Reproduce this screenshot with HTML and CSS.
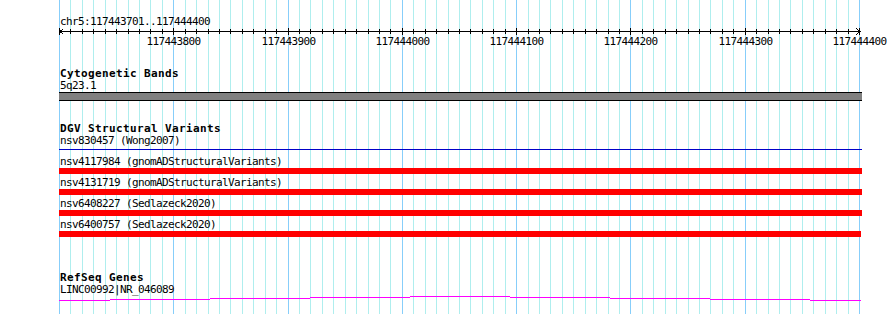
FILE: index.html
```html
<!DOCTYPE html>
<html lang="en">

<head>
    <meta charset="UTF-8">
    <meta name="viewport" content="width=device-width, initial-scale=1.0">
    <title>chr5:117443701..117444400</title>
    <link rel="stylesheet" href="styles.css">
</head>

<body>
    <div id="panel">
        <svg id="grid" width="890" height="314"></svg>
        <div class="label coord">chr5:117443701..117444400</div>
        <svg id="ruler" width="890" height="19"></svg>

        <div class="track" id="cytoband">
            <div class="label title">Cytogenetic Bands</div>
            <div class="label">5q23.1</div>
            <div class="band"></div>
        </div>

        <div class="track" id="dgv">
            <div class="label title">DGV Structural Variants</div>
            <div class="label">nsv830457 (Wong2007)</div>
            <div class="thin"></div>
            <div id="variants"></div>
        </div>

        <div class="track" id="refseq">
            <div class="label title">RefSeq Genes</div>
            <div class="label">LINC00992|NR_046089</div>
            <svg id="gene" width="890" height="6"></svg>
        </div>
    </div>
    <script>
        const left = 59;
        const step = 800 / 70;

        function xAt(i) {
            return Math.round(left + i * step) + 0.5;
        }

        function renderGrid() {
            let mess = "";
            for (let i = 0; i <= 70; i++) {
                let cls = i % 10 === 0 ? "major" : "minor";
                mess += `<line class="${cls}" x1="${xAt(i)}" y1="0" x2="${xAt(i)}" y2="314"/>`;
            }
            document.getElementById("grid").innerHTML = mess;
        }

        function renderRuler() {
            let mess = `<line class="axis" x1="59" y1="2.5" x2="860" y2="2.5"/>`;
            mess += `<polyline class="axis" points="63.5,-0.5 60,2.5 63.5,5.5"/>`;
            mess += `<polyline class="axis" points="856.5,-0.5 860,2.5 856.5,5.5"/>`;
            for (let i = 0; i <= 70; i++) {
                if (i % 10 === 0) {
                    mess += `<line class="axis" x1="${xAt(i)}" y1="-1" x2="${xAt(i)}" y2="6"/>`;
                    if (i > 0) {
                        mess += `<text class="pos" x="${xAt(i)}" y="16">${117443700 + i * 10}</text>`;
                    }
                } else {
                    mess += `<line class="axis" x1="${xAt(i)}" y1="0" x2="${xAt(i)}" y2="5"/>`;
                }
            }
            document.getElementById("ruler").innerHTML = mess;
        }

        function renderVariants() {
            let list = [
                "nsv4117984 (gnomADStructuralVariants)",
                "nsv4131719 (gnomADStructuralVariants)",
                "nsv6408227 (Sedlazeck2020)",
                "nsv6400757 (Sedlazeck2020)"
            ];
            let mess = "";
            for (let i = 0; i < list.length; i++) {
                mess += `
            <div class="variant">
                <div class="label">${list[i]}</div>
                <div class="bar${i === list.length - 1 ? " short" : ""}"></div>
            </div>
        `;
            }
            document.getElementById("variants").innerHTML = mess;
        }

        function renderGene() {
            // intron connector, a shallow hat drawn pixel by pixel
            let steps = [[59, 110, 4], [110, 210, 3], [210, 310, 2], [310, 410, 1], [410, 510, 0],
                [510, 610, 1], [610, 710, 2], [710, 810, 3], [810, 861, 4]];
            let mess = "";
            for (let s of steps) {
                mess += `<rect x="${s[0]}" y="${s[2]}" width="${s[1] - s[0]}" height="1"/>`;
            }
            document.getElementById("gene").innerHTML = mess;
        }

        renderGrid();
        renderRuler();
        renderVariants();
        renderGene();
    </script>
</body>

</html>
```

FILE: styles.css
```css
* {
    margin: 0;
    padding: 0;
}

body {
    background-color: #ffffff;
    font-family: "DejaVu Sans Mono", monospace;
    color: #000000;
}

#panel {
    position: relative;
    z-index: 0;
    width: 890px;
    height: 314px;
    padding-top: 16px;
    box-sizing: border-box;
    overflow: hidden;
}

#grid {
    position: absolute;
    top: 0;
    left: 0;
    z-index: -1;
    shape-rendering: crispEdges;
}

#grid .minor {
    stroke: #afeeee;
    stroke-width: 1;
}

#grid .major {
    stroke: #87cefa;
    stroke-width: 1;
}

.label {
    height: 12px;
    line-height: 12px;
    font-size: 11px;
    letter-spacing: -0.62px;
    padding-left: 60px;
    white-space: pre;
}

.title {
    font-weight: bold;
    letter-spacing: 0.38px;
}

#ruler {
    display: block;
    margin-top: 1px;
    overflow: visible;
}

#ruler .axis {
    stroke: #000000;
    stroke-width: 1;
    fill: none;
    shape-rendering: crispEdges;
}

#ruler .pos {
    font-family: "DejaVu Sans Mono", monospace;
    font-size: 11px;
    letter-spacing: -0.62px;
    text-anchor: middle;
    fill: #000000;
}

#cytoband {
    margin-top: 20px;
}

.band {
    margin-left: 59px;
    width: 803px;
    height: 9px;
    box-sizing: border-box;
    background-color: #808080;
    border-top: 1px solid #000000;
    border-bottom: 1px solid #000000;
}

#dgv {
    margin-top: 22px;
}

.thin {
    margin-left: 59px;
    margin-top: 2px;
    margin-bottom: 6px;
    width: 803px;
    height: 1px;
    background-color: #0000c8;
}

.variant {
    margin-bottom: 3px;
}

.bar {
    margin-left: 59px;
    width: 803px;
    height: 6px;
    background-color: #ff0000;
}

.bar.short {
    width: 802px;
}

#refseq {
    margin-top: 35px;
}

#gene {
    display: block;
    fill: #ff00ff;
    shape-rendering: crispEdges;
}
```
